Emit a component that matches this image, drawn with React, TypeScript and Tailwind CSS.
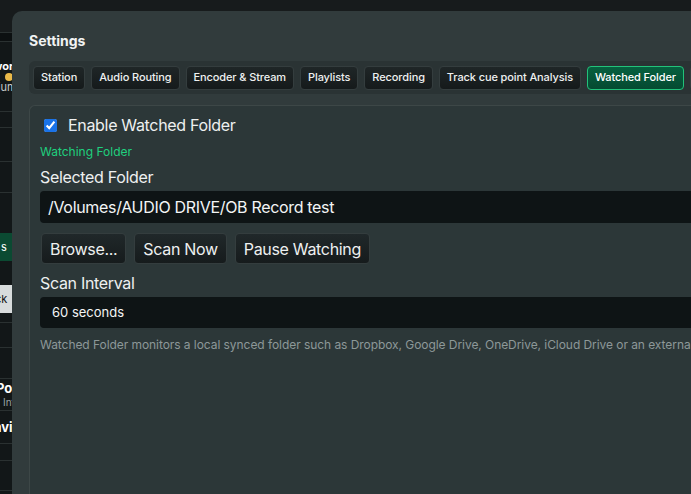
import { useState } from "react";

const tabs = [
  "Station",
  "Audio Routing",
  "Encoder & Stream",
  "Playlists",
  "Recording",
  "Track cue point Analysis",
  "Watched Folder",
  "Advanced",
];

function BackgroundStrip() {
  return (
    <div className="flex h-full w-[12px] flex-col overflow-hidden bg-[#121718] text-[11px] leading-none">
      <div className="h-[32px] shrink-0 bg-[#171b1c]" />
      <div className="h-[10px] shrink-0 border-y border-[#2a3131] bg-[#0c1011]" />
      <div className="flex h-[70px] shrink-0 flex-col justify-center gap-[1px] border-b border-[#2a3131]">
        <span className="-ml-[7px] whitespace-nowrap font-bold text-white">wor</span>
        <span className="ml-[5px] h-[8px] w-[8px] rounded-full bg-[#e9b949]" />
        <span className="-ml-[9px] whitespace-nowrap text-[#c8cdcd]">dium</span>
      </div>
      <div className="h-[16px] shrink-0 border-b border-[#2a3131]" />
      <div className="h-[34px] shrink-0 border-b border-[#2a3131]" />
      <div className="h-[31px] shrink-0 border-b border-[#2a3131]" />
      <div className="h-[40px] shrink-0" />
      <div className="flex h-[28px] shrink-0 items-center bg-[#0b4a32]">
        <span className="ml-[1px] text-white">s</span>
      </div>
      <div className="h-[24px] shrink-0" />
      <div className="flex h-[28px] shrink-0 items-center bg-[#d8dcdc]">
        <span className="-ml-[5px] whitespace-nowrap text-[#111]">ck</span>
      </div>
      <div className="h-[10px] shrink-0 border-b border-[#2a3131]" />
      <div className="h-[25px] shrink-0 border-b border-[#2a3131]" />
      <div className="h-[31px] shrink-0 border-b border-[#2a3131]" />
      <div className="flex h-[32px] shrink-0 flex-col justify-center gap-[2px] border-b border-[#2a3131]">
        <span className="-ml-[4px] whitespace-nowrap text-[13px] font-bold text-white">Po</span>
        <span className="ml-[3px] whitespace-nowrap text-[10px] text-[#9aa3a3]">Int</span>
      </div>
      <div className="flex h-[33px] shrink-0 items-center border-b border-[#2a3131]">
        <span className="-ml-[6px] whitespace-nowrap text-[13px] font-bold text-white">avi</span>
      </div>
      <div className="h-[17px] shrink-0 border-b border-[#2a3131]" />
      <div className="h-[30px] shrink-0 border-b border-[#2a3131]" />
    </div>
  );
}

export default function App() {
  const [enabled, setEnabled] = useState(true);
  const active = "Watched Folder";

  return (
    <div
      className="relative flex h-[494px] w-[691px] overflow-hidden bg-[#171b1c] text-white"
      style={{ fontFamily: "Inter, 'Noto Sans', sans-serif" }}
    >
      <BackgroundStrip />

      <div className="absolute left-[12px] top-[11px] flex h-[500px] w-[720px] flex-col rounded-tl-[10px] bg-[#313b3c] pl-[17px]">
        <h2 className="mt-[23px] text-[14px] font-bold leading-none text-[#f1f3f3]">Settings</h2>

        <div className="mt-[13px] flex h-[33px] items-center gap-[6px] rounded-l-[6px] bg-[#2a3334] pl-[4px]">
          {tabs.map((t) => (
            <button
              key={t}
              type="button"
              className={
                t === active
                  ? "h-[24px] shrink-0 whitespace-nowrap rounded-[4px] border border-[#22c27a] bg-gradient-to-b from-[#07603f] to-[#054a31] px-[7px] text-[11px] font-medium tracking-[-0.01em] text-white"
                  : "h-[24px] shrink-0 whitespace-nowrap rounded-[4px] border border-[#343d3e] bg-gradient-to-b from-[#1f2627] to-[#151a1b] px-[7px] text-[11px] font-medium tracking-[-0.01em] text-[#eef0f0]"
              }
            >
              {t}
            </button>
          ))}
        </div>

        <div className="mt-[11px] flex flex-1 flex-col rounded-tl-[6px] border-l border-t border-[#3d4747] bg-[#2c3738] pl-[10px] tracking-[-0.02em]">
          <label className="mt-[11px] flex items-center gap-[11px] pl-[4px]">
            <input
              type="checkbox"
              checked={enabled}
              onChange={(e) => setEnabled(e.target.checked)}
              className="h-[13px] w-[13px] accent-[#1a73e8]"
            />
            <span className="text-[16px] leading-none text-[#eef0f0]">Enable Watched Folder</span>
          </label>

          <p className="mt-[13px] text-[12px] leading-none tracking-normal text-[#1fd07e]">Watching Folder</p>

          <p className="mt-[11px] text-[16px] leading-none text-[#eef0f0]">Selected Folder</p>
          <div className="mt-[6px] flex h-[32px] items-center rounded-l-[4px] bg-[#0e1415] pl-[8px] text-[16px] text-[#f3f5f5]">
            /Volumes/AUDIO DRIVE/OB Record test
          </div>

          <div className="mt-[10px] flex gap-[8px] pl-[1px]">
            {["Browse...", "Scan Now", "Pause Watching"].map((b) => (
              <button
                key={b}
                type="button"
                className="h-[31px] rounded-[4px] border border-[#343d3e] bg-gradient-to-b from-[#20282a] to-[#161b1c] px-[8px] text-[16px] text-[#eef0f0]"
              >
                {b}
              </button>
            ))}
          </div>

          <p className="mt-[11px] text-[16px] leading-none text-[#eef0f0]">Scan Interval</p>
          <div className="mt-[6px] flex h-[31px] items-center rounded-l-[4px] bg-[#0e1415] pl-[12px] text-[13px] tracking-normal text-[#f3f5f5]">
            60 seconds
          </div>

          <p className="mt-[11px] whitespace-nowrap text-[12px] leading-none tracking-[-0.005em] text-[#8d9898]">
            Watched Folder monitors a local synced folder such as Dropbox, Google Drive, OneDrive, iCloud Drive or an external drive.
          </p>
        </div>
      </div>
    </div>
  );
}
